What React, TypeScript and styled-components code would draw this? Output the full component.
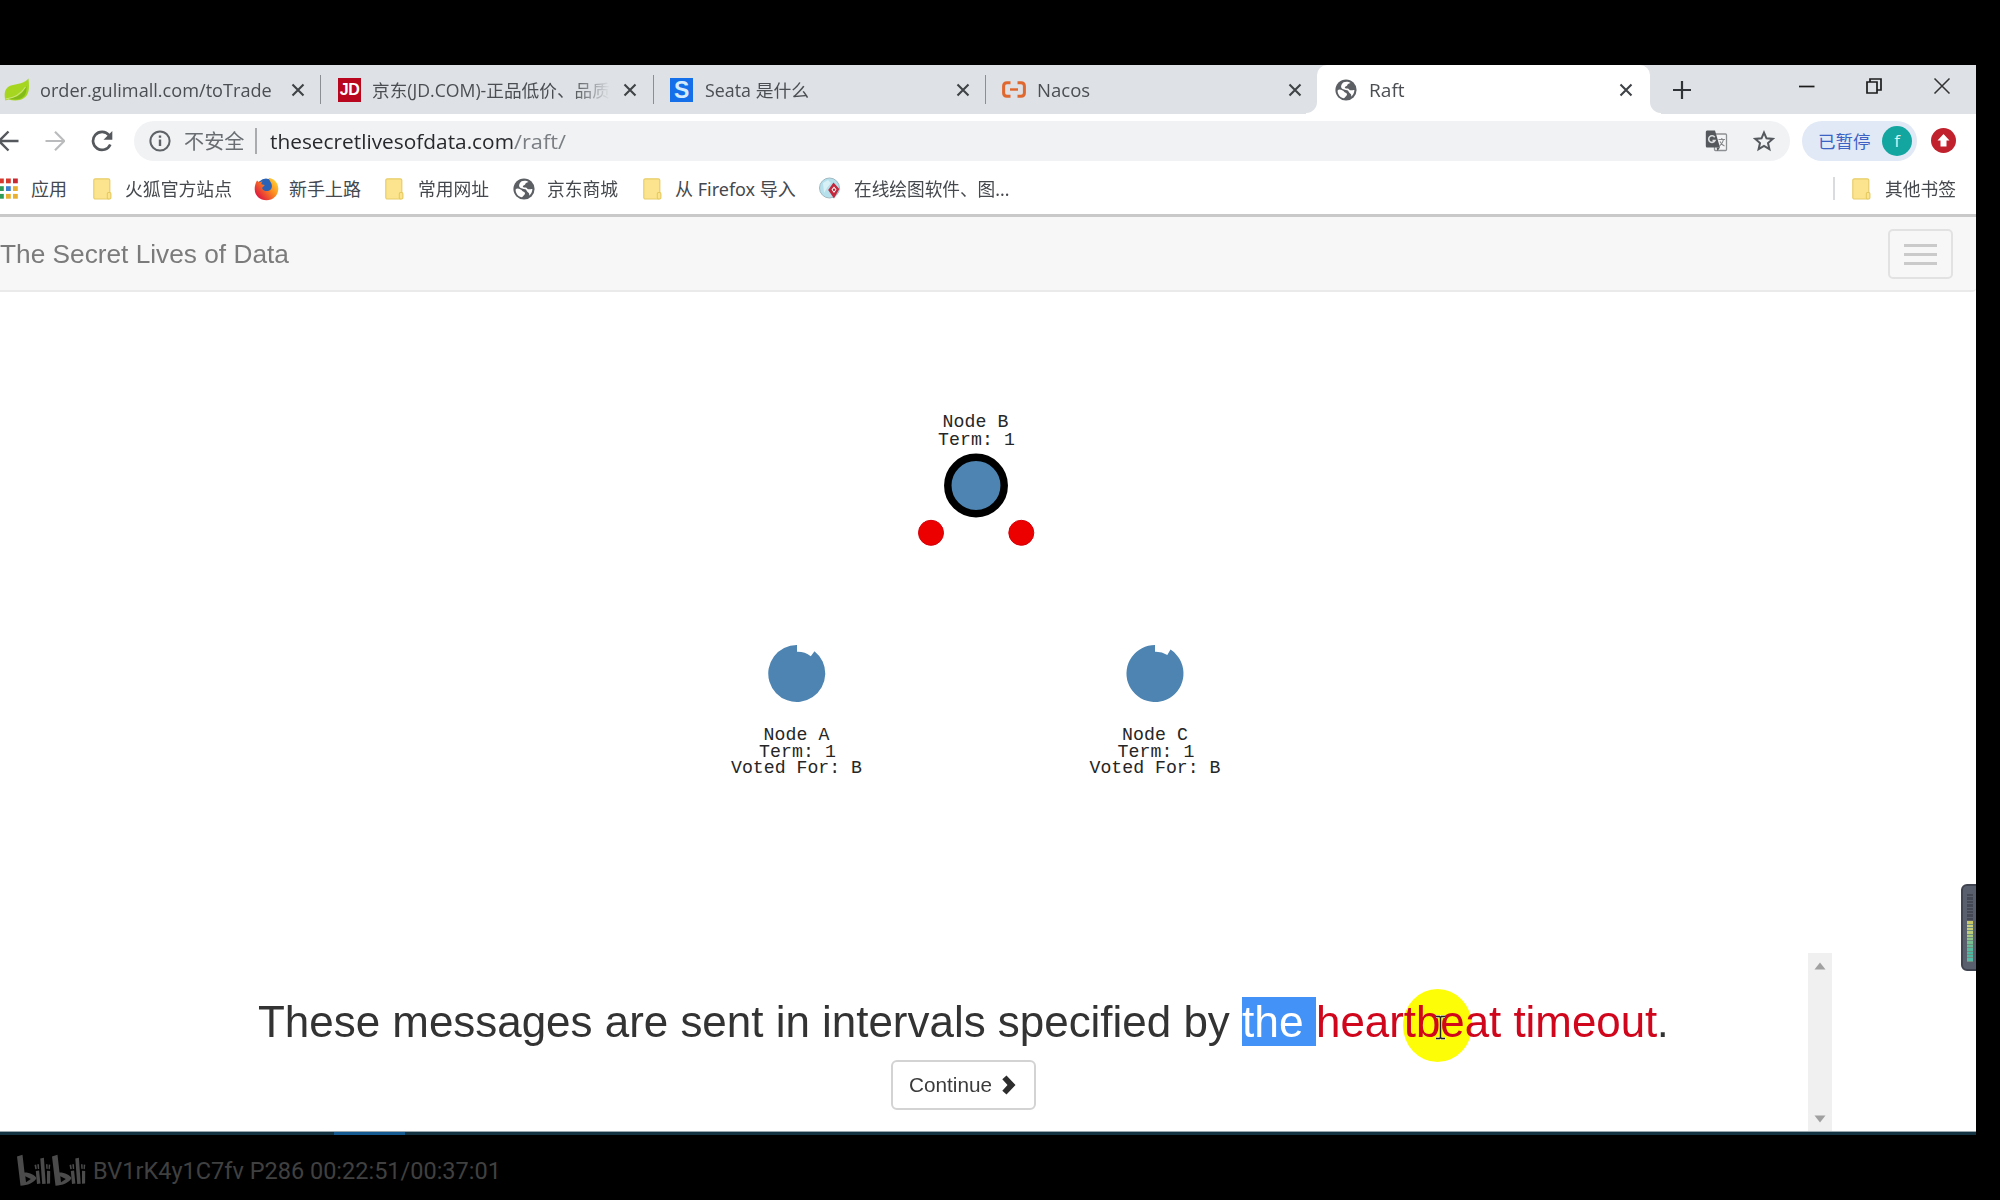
import React, { useLayoutEffect, useRef } from "react";
import styled, { createGlobalStyle } from "styled-components";

const GlobalStyle = createGlobalStyle`
  * { box-sizing: border-box; }
  body { margin: 0; background: #000; overflow: hidden; }
`;

const uiFont = `"Open Sans", "Noto Sans CJK SC", sans-serif`;
const cjkFont = `"Noto Sans", "Noto Sans CJK SC", sans-serif`;
const pageFont = `"Liberation Sans", Arial, sans-serif`;

/* ---------- text stretched to a given width ---------- */
const FitBox = styled.span<{ $w: number }>`
  display: block;
  flex: none;
  width: ${(p) => p.$w}px;
  white-space: pre;
`;
const FitInner = styled.span`
  display: inline-block;
  transform-origin: 0 50%;
`;
function Fit({ w, children }: { w: number; children: React.ReactNode }) {
  const ref = useRef<HTMLSpanElement>(null);
  useLayoutEffect(() => {
    const el = ref.current;
    if (el && el.offsetWidth) el.style.transform = `scaleX(${w / el.offsetWidth})`;
  }, [w]);
  return (
    <FitBox $w={w}>
      <FitInner ref={ref}>{children}</FitInner>
    </FitBox>
  );
}

/* ---------- frame ---------- */
const Frame = styled.div`
  width: 2000px;
  height: 1200px;
  padding-top: 65px;
  background: #000;
  display: flex;
  flex-direction: column;
  overflow: hidden;
`;
const Screen = styled.div`
  position: relative;
  width: 1976px;
  height: 1070px;
  background: #fff;
  display: flex;
  flex-direction: column;
  overflow: hidden;
`;

/* ---------- tabs ---------- */
const TabStrip = styled.div`
  height: 49px;
  flex: none;
  background: #dee1e5;
  display: flex;
`;
const Tab = styled.div<{ $w: number; $pad: number; $active?: boolean }>`
  position: relative;
  width: ${(p) => p.$w}px;
  height: 49px;
  padding-left: ${(p) => p.$pad}px;
  flex: none;
  display: flex;
  align-items: center;
  background: ${(p) => (p.$active ? "#fff" : "transparent")};
  border-radius: ${(p) => (p.$active ? "10px 10px 0 0" : "0")};
  &::before, &::after {
    content: "";
    display: ${(p) => (p.$active ? "block" : "none")};
    position: absolute;
    bottom: 0;
    width: 11px;
    height: 12px;
  }
  &::before { left: -11px; background: radial-gradient(circle at 0 0, transparent 10.5px, #fff 11.5px); }
  &::after { right: -11px; background: radial-gradient(circle at 100% 0, transparent 10.5px, #fff 11.5px); }
`;
const TabTitle = styled.div<{ $ml: number; $fade?: boolean }>`
  margin-left: ${(p) => p.$ml}px;
  padding-top: 1px;
  font: 17.5px/28px ${uiFont};
  color: #4b4e52;
  overflow: hidden;
  ${(p) => (p.$fade ? "-webkit-mask-image: linear-gradient(90deg, #000 84%, transparent 100%);" : "")}
`;
const TabEnd = styled.div<{ $gap: number }>`
  margin-left: auto;
  display: flex;
  align-items: center;
  gap: ${(p) => p.$gap}px;
`;
const TabRule = styled.div`
  width: 1.5px;
  height: 29px;
  background: #8b8e92;
`;
const StripTools = styled.div`
  flex: 1;
  display: flex;
  align-items: center;
  padding: 0 25px 0 23px;
`;
const WindowButtons = styled.div`
  margin-left: auto;
  margin-top: -8px;
  display: flex;
  align-items: center;
  gap: 51px;
`;

const CloseX = () => (
  <svg width="14" height="14" viewBox="0 0 14 14">
    <path d="M1.5 1.5l11 11M12.5 1.5l-11 11" stroke="#3f4246" strokeWidth="2.1" />
  </svg>
);
const Globe = ({ s }: { s: number }) => (
  <svg width={s} height={s} viewBox="0 0 22 22">
    <circle cx="11" cy="11" r="10.6" fill="#5c5f63" />
    <path
      d="M2.6 11.4C4 9.8 6 11 7.6 11.4c1.6.4 1.4 1.9 3 2.3 1.5.5 1.9 1.9.8 3-1 1.1-1.6 2.4-3 2.5-3.400-1-5.900-4-5.800-7.800z"
      fill="#fff"
    />
    <path
      d="M8.600 3.300c2-.9 5-.9 7 .7-1.200.6-2.900.5-3.200 1.900-.2 1.300-2.500 1-2.600 2.600 0 1 1.700 1.200 2.800 1 1.200-.1 1.500 1.600 2.800 1.800 1.400.3 2.500-.5 4-.2-.1 3-1.400 5.200-3.500 6.700.8-1.700.3-2.800-1-3.600-1.300-.7-1.100-2.400-2.700-3-1.800-.6-4.600-.2-5.800-2.200-.9-1.900.2-4.200 2.200-5.700z"
      fill="#fff"
    />
  </svg>
);
const Leaf = () => (
  <svg width="26" height="24" viewBox="0 0 26 24">
    <path d="M24.500.5c1 9 .8 16-4.500 19.500-5 3.300-11 2.600-15.500 1.500L1.300 22.500C-.5 14 1.500 9 8 7.300 14 5.800 20 5.500 24.500.5z" fill="#a6d61f" />
    <path d="M4 20.500C12 20 18 17 22.500 8c.3 6-1 9.500-4 11.600-4 2.600-9 2.400-14.500.9z" fill="#83bb1b" />
    <path d="M1.500 21C10 20 17 16 21.500 9" stroke="#c9e57a" strokeWidth="1.100" fill="none" />
  </svg>
);
const LogoTile = styled.div<{ $bg: string; $size: number; $c: string; $bold?: boolean }>`
  width: 23px;
  height: 24px;
  flex: none;
  display: flex;
  align-items: center;
  justify-content: center;
  background: ${(p) => p.$bg};
  color: ${(p) => p.$c};
  font: bold ${(p) => p.$size}px/24px "Liberation Sans", sans-serif;
  letter-spacing: -0.5px;
`;
const NacosMark = () => (
  <svg width="24" height="17" viewBox="0 0 24 17" fill="none" stroke="#e0682f" strokeWidth="3">
    <path d="M8.500 1.700H5Q1.600 1.700 1.600 5v7Q1.600 15.300 5 15.300h3.500M15.500 1.700H19q3.400 0 3.400 3.300v7q0 3.300-3.400 3.300h-3.500" />
    <path d="M8 8.500h8" strokeWidth="2.400" />
  </svg>
);

/* ---------- toolbar ---------- */
const Toolbar = styled.div`
  height: 53px;
  flex: none;
  display: flex;
  align-items: center;
  background: #fff;
`;
const NavIcons = styled.div`
  width: 134px;
  display: flex;
  align-items: center;
  gap: 25px;
  flex: none;
`;
const Omnibox = styled.div`
  width: 1656px;
  height: 40px;
  flex: none;
  border-radius: 20px;
  background: #f0f2f4;
  display: flex;
  align-items: center;
  padding: 0 15px 0 15px;
  font: 20.5px/30px ${uiFont};
  color: #6a6d71;
`;
const Insecure = styled.div`
  margin-left: 13px;
`;
const UrlRule = styled.div`
  width: 1.500px;
  height: 26px;
  margin: 0 13.500px 0 10px;
  background: #a9abae;
`;
const Host = styled.div`
  display: flex;
  color: #27292c;
`;
const Path = styled.div`
  color: #7b7e82;
`;
const BoxIcons = styled.div`
  margin-left: auto;
  display: flex;
  align-items: center;
  gap: 25px;
`;
const Profile = styled.div`
  margin-left: 12px;
  width: 115px;
  height: 40px;
  border-radius: 20px;
  background: #e1e9f6;
  display: flex;
  align-items: center;
  padding-left: 16px;
  gap: 11px;
  color: #3c62c4;
  font: 17.500px/26px ${cjkFont};
`;
const Avatar = styled.div`
  width: 30px;
  height: 30px;
  border-radius: 50%;
  background: #13a5a0;
  color: #d9f3f1;
  text-align: center;
  font: 17px/29px "Open Sans", sans-serif;
`;
const UpdateDot = styled.div`
  margin-left: 14px;
  width: 25px;
  height: 25px;
  border-radius: 50%;
  background: #c0212c;
  display: flex;
  align-items: center;
  justify-content: center;
`;

/* ---------- bookmarks ---------- */
const Bookmarks = styled.div`
  height: 47px;
  flex: none;
  display: flex;
  align-items: center;
  padding-bottom: 4px;
  font: 18px/26px ${cjkFont};
  color: #45484c;
`;
const Bookmark = styled.div<{ $gap: number; $ml: number }>`
  display: flex;
  align-items: center;
  gap: ${(p) => p.$gap}px;
  margin-left: ${(p) => p.$ml}px;
  flex: none;
`;
const OtherBookmarks = styled.div`
  margin-left: auto;
  padding-right: 20px;
  display: flex;
  align-items: center;
  gap: 14px;
`;
const BookmarkRule = styled.div`
  width: 2px;
  height: 23px;
  margin-right: 3px;
  background: #d9dbdd;
`;
const FolderIcon = () => (
  <svg width="19" height="22" viewBox="0 0 19 22">
    <rect x=".8" y=".8" width="16" height="20.200" rx="1.500" fill="#fbe48d" stroke="#e8cd6b" strokeWidth="1.200" />
    <rect x="14.300" y="14.500" width="3.600" height="6.500" rx="1.200" fill="#fbe48d" stroke="#e5c95f" strokeWidth="1.100" />
  </svg>
);
const appColors = ["#d8392f", "#d8392f", "#c8282f", "#2f9b57", "#3a7fd0", "#e8b02e", "#2f9b57", "#e8b02e", "#e8b02e"];
const AppsIcon = () => (
  <svg width="18" height="21" viewBox="0 0 18 21">
    {appColors.map((c, i) => (
      <rect key={i} x={-1 + (i % 3) * 7} y={0.5 + Math.floor(i / 3) * 7.7} width="4.800" height="4.800" fill={c} />
    ))}
  </svg>
);
const FirefoxIcon = () => (
  <svg width="25" height="24" viewBox="0 0 25 24">
    <defs>
      <linearGradient id="fox" x1="1" y1=".1" x2=".1" y2=".8">
        <stop offset="0" stopColor="#ffe03a" />
        <stop offset=".45" stopColor="#fb8b1e" />
        <stop offset="1" stopColor="#e0193f" />
      </linearGradient>
    </defs>
    <circle cx="12" cy="10.500" r="9" fill="#2a62b5" />
    <path
      d="M3 3.500l2.500 2C6.500 4.600 7.500 4.400 8.500 4.500c-.8.800-1.200 1.800-1 2.800l3 .6c.3 1.200-2.200 1.700-2.400 3 .5 2.800 4.200 3.900 7.200 2.600 3.300-1.700 3.200-6 1.200-8.600L14.500 1C19.500 1.200 24.500 5.500 24.300 12c-.2 6.500-5.300 11.300-11.800 11.300C6 23.300.8 18.500.7 12.500.6 9 1.500 6 3 3.500z"
      fill="url(#fox)"
    />
  </svg>
);
const DrawIcon = () => (
  <svg width="22" height="23" viewBox="0 0 22 23">
    <circle cx="10.500" cy="11" r="10" fill="#b5e0ec" stroke="#9fb9c2" />
    <path d="M4 6l5-3 3 3-4 5-3 5z" fill="#d8f1f7" />
    <path d="M14.500 5.500l5.800 6.500-5.300 9.500-5.800-8.500z" fill="#c3283c" />
    <path d="M15 9.500l2.500 3-2.500 3.500-2.500-3.500z" fill="#fff" />
    <circle cx="15" cy="12.700" r="1.200" fill="#c3283c" />
  </svg>
);

/* ---------- page ---------- */
const PageNav = styled.div`
  height: 78px;
  flex: none;
  border-top: 3px solid #c9c9c9;
  border-bottom: 2px solid #eaeaea;
  border-radius: 0 0 4px 0;
  background: #f7f7f7;
  display: flex;
  align-items: center;
  justify-content: space-between;
  padding-right: 23px;
  font: 25.800px/36px ${pageFont};
  color: #7b7b7b;
`;
const MenuButton = styled.div`
  width: 65px;
  height: 50px;
  margin-top: 1px;
  border: 2px solid #e2e2e2;
  border-radius: 5px;
  display: flex;
  flex-direction: column;
  align-items: center;
  justify-content: center;
  gap: 6px;
`;
const MenuBar = styled.div`
  width: 33px;
  height: 3px;
  background: #cacaca;
`;
const Stage = styled.div`
  height: 661px;
  flex: none;
`;
const Diagram = styled.svg`
  display: block;
  font: 18.200px "Liberation Mono", monospace;
`;
const Narration = styled.div`
  position: relative;
  height: 178px;
  flex: none;
  display: flex;
`;
const Story = styled.div`
  width: 1808px;
  flex: none;
  padding-top: 44px;
  display: flex;
  flex-direction: column;
`;
const Headline = styled.div`
  position: relative;
  height: 48.500px;
  padding-left: 258px;
  display: flex;
  font: 45px/50px ${pageFont};
  color: #333;
`;
const Selected = styled.span`
  height: 48.500px;
  background: #4292f7;
  color: #fff;
`;
const Term = styled.span`
  position: relative;
  color: #d0061c;
`;
const PointerHalo = styled.div`
  position: absolute;
  left: 1403px;
  top: -8px;
  width: 69px;
  height: 73px;
  border-radius: 50%;
  background: #fdfd08;
`;
const Caret = styled.svg`
  position: absolute;
  left: 1435px;
  top: 18px;
`;
const ContinueButton = styled.div`
  width: 145px;
  height: 50px;
  margin: 14.500px 0 0 891px;
  border: 2px solid #d3d3d3;
  border-radius: 6px;
  background: #fff;
  display: flex;
  align-items: center;
  padding-left: 16px;
  gap: 9px;
  font: 20px/28px ${pageFont};
  color: #3b3b3b;
`;
const ScrollTrack = styled.div`
  width: 24px;
  height: 178px;
  background: #f0f0f0;
  display: flex;
  flex-direction: column;
  align-items: center;
  justify-content: space-between;
  padding: 9px 0 8px;
`;
const Taskbar = styled.div`
  height: 4px;
  flex: none;
  border-top: 1px solid #9aa8ae;
  background: #153443;
  padding-left: 334px;
`;
const TaskbarActive = styled.div`
  width: 71px;
  height: 3px;
  background: #155b92;
`;
const VolumeMeter = styled.div`
  position: absolute;
  left: 1961px;
  top: 819px;
  width: 24px;
  height: 87px;
  border-radius: 6px;
  border: 2px solid #3f4450;
  background: #595f6d;
  padding: 8px 0 0 4px;
  display: flex;
  flex-direction: column;
`;
const MeterBar = styled.div<{ $c: string; $gapColor: string }>`
  width: 6px;
  height: 3.400px;
  flex: none;
  background: ${(p) => p.$c};
  border-bottom: 1px solid ${(p) => p.$gapColor};
`;

/* ---------- footer ---------- */
const Footer = styled.div`
  height: 65px;
  display: flex;
  align-items: center;
  padding: 6px 0 0 17px;
  gap: 7px;
  font: 23.500px/32px Roboto, sans-serif;
  color: #404040;
`;
const BiliLogo = () => (
  <svg width="69" height="33" viewBox="0 0 69 33" fill="#4b4b4b">
    {[0, 35].map((x) => (
      <g key={x} transform={`translate(${x} 0)`}>
        <path
          fillRule="evenodd"
          d="M0 2.500L5.500.8 7.500 18.500C13 18.500 18 21 19.500 24 18 28.500 10 31.500 3.500 31.800zM8.300 22.300L9 28.200 13.800 25z"
        />
        <path d="M18.800 17l3.300-.4 1.300 13-3.400.3zM23.300 4.500l3.600-.8 1.800 26-3.500.2zM30 16.800l3.200.2-.1 12.600-3.100.2zM17.500 11l1.700-.5.600 4.500-1.500.2zM20.300 10.300l1.700-.1.200 4.700-1.400.1zM29 10.200l1.600.1.100 4.600-1.400-.1zM31.700 10.500l1.600.3-.5 4.400-1.300-.2z" />
      </g>
    ))}
  </svg>
);

const meter = [
  "#444955", "#444955", "#444955", "#444955", "#444955", "#444955", "#444955", "#444955",
  "#c9c968", "#cdd07c", "#c5cd78", "#bccd7c", "#a9c97f", "#8fc58a", "#78c092", "#65bd98", "#57ba9e", "#4eb9a2", "#4eb9a2", "#55bba8",
];

export default function App() {
  return (
    <>
      <GlobalStyle />
      <Frame>
        <Screen>
          <TabStrip>
            <Tab $w={321} $pad={4}>
              <Leaf />
              <TabTitle $ml={10}><Fit w={232}>order.gulimall.com/toTrade</Fit></TabTitle>
              <TabEnd $gap={15}><CloseX /><TabRule /></TabEnd>
            </Tab>
            <Tab $w={333} $pad={17}>
              <LogoTile $bg="#b8061f" $c="#fff" $size={16}>JD</LogoTile>
              <TabTitle $ml={11} $fade><Fit w={238}>京东(JD.COM)-正品低价、品质</Fit></TabTitle>
              <TabEnd $gap={16}><CloseX /><TabRule /></TabEnd>
            </Tab>
            <Tab $w={332} $pad={16}>
              <LogoTile $bg="#156fe8" $c="#d5ecff" $size={23}>S</LogoTile>
              <TabTitle $ml={12}><Fit w={104}>Seata 是什么</Fit></TabTitle>
              <TabEnd $gap={15}><CloseX /><TabRule /></TabEnd>
            </Tab>
            <Tab $w={331} $pad={16}>
              <NacosMark />
              <TabTitle $ml={11}><Fit w={53}>Nacos</Fit></TabTitle>
              <TabEnd $gap={15}><CloseX /><span /></TabEnd>
            </Tab>
            <Tab $w={333} $pad={18} $active>
              <Globe s={22} />
              <TabTitle $ml={12}><Fit w={36}>Raft</Fit></TabTitle>
              <TabEnd $gap={17}><CloseX /><span /></TabEnd>
            </Tab>
            <StripTools>
              <svg width="18" height="18" viewBox="0 0 18 18">
                <path d="M9 0v18M0 9h18" stroke="#2f3236" strokeWidth="2.200" />
              </svg>
              <WindowButtons>
                <svg width="16" height="16" viewBox="0 0 16 16">
                  <path d="M0 8.500h15.500" stroke="#1c1c1c" strokeWidth="1.700" />
                </svg>
                <svg width="16" height="16" viewBox="0 0 16 16" fill="none" stroke="#1c1c1c" strokeWidth="1.700">
                  <path d="M1 4h10v11H1zM4 4V1h11v11h-4" />
                </svg>
                <svg width="18" height="16" viewBox="0 0 18 16">
                  <path d="M1.500.5l15 15M16.500.5l-15 15" stroke="#333" strokeWidth="1.500" />
                </svg>
              </WindowButtons>
            </StripTools>
          </TabStrip>

          <Toolbar>
            <NavIcons>
              <svg width="19" height="22" viewBox="0 0 19 22" fill="none" stroke="#55585c" strokeWidth="2.400">
                <path d="M18.500 11H-1M8.500 1.500L-1 11l9.500 9.500" />
              </svg>
              <svg width="21" height="22" viewBox="0 0 21 22" fill="none" stroke="#b9bbbd" strokeWidth="2.200">
                <path d="M1.500 11h18.500M11 1.800L20.300 11 11 20.200" />
              </svg>
              <svg width="23" height="22" viewBox="0 0 23 22" fill="none" stroke="#55585c" strokeWidth="2.700">
                <path d="M20.300 14.500A9 9 0 1 1 19 5.200" />
                <path d="M22.300 1v8.800H13.500z" fill="#55585c" stroke="none" />
              </svg>
            </NavIcons>
            <Omnibox>
              <svg width="22" height="22" viewBox="0 0 22 22" fill="none" stroke="#5f6266" strokeWidth="2">
                <circle cx="11" cy="11" r="9.600" />
                <path d="M11 9.500v6.500M11 5.500v2.300" strokeWidth="2.400" />
              </svg>
              <Insecure><Fit w={61}>不安全</Fit></Insecure>
              <UrlRule />
              <Host><Fit w={244}>thesecretlivesofdata.com</Fit></Host>
              <Path><Fit w={52}>/raft/</Fit></Path>
              <BoxIcons>
                <svg width="23" height="22" viewBox="0 0 23 22">
                  <rect x="9.500" y="4" width="12" height="16.500" rx="1" fill="#f4f5f6" stroke="#8d9093" strokeWidth="1.300" />
                  <path d="M2 .5h8l5 17H2Q.8 17.500.8 16V2Q.8.500 2 .500z" fill="#55585c" />
                  <path d="M9.700 7.200A3.300 3.300 0 1 0 10 10.500H7.500" fill="none" stroke="#dcdee0" strokeWidth="1.600" />
                  <path d="M13.500 9.500h6.500M16.800 8v1.500M18.500 9.500c-.5 3-2 5-4 6.500M15 11.500c1 2 2.500 3.500 4.500 4.500" stroke="#85888b" strokeWidth="1.100" fill="none" />
                  <path d="M11.500 17.500h3.500l-2.500 3.500z" fill="#55585c" />
                </svg>
                <svg width="22" height="22" viewBox="0 0 22 22">
                  <path d="M11 2.600l2.500 5.700 6.200.6-4.700 4.100 1.400 6.100L11 15.900l-5.400 3.200L7 13 2.300 8.900l6.200-.6z" fill="none" stroke="#55585c" strokeWidth="2" />
                </svg>
              </BoxIcons>
            </Omnibox>
            <Profile>
              <Fit w={53}>已暂停</Fit>
              <Avatar>f</Avatar>
            </Profile>
            <UpdateDot>
              <svg width="13" height="13" viewBox="0 0 13 13">
                <path d="M6.500 0L12.500 6.500H9.500V12.500H3.500V6.500H.5z" fill="#fff" />
              </svg>
            </UpdateDot>
          </Toolbar>

          <Bookmarks>
            <Bookmark $ml={0} $gap={13}><AppsIcon /><Fit w={36}>应用</Fit></Bookmark>
            <Bookmark $ml={26} $gap={13}><FolderIcon /><Fit w={107}>火狐官方站点</Fit></Bookmark>
            <Bookmark $ml={22} $gap={10}><FirefoxIcon /><Fit w={72}>新手上路</Fit></Bookmark>
            <Bookmark $ml={24} $gap={14}><FolderIcon /><Fit w={71}>常用网址</Fit></Bookmark>
            <Bookmark $ml={24} $gap={12}><Globe s={22} /><Fit w={71}>京东商城</Fit></Bookmark>
            <Bookmark $ml={25} $gap={13}><FolderIcon /><Fit w={121}>从 Firefox 导入</Fit></Bookmark>
            <Bookmark $ml={23} $gap={13}><DrawIcon /><Fit w={155}>在线绘图软件、图...</Fit></Bookmark>
            <OtherBookmarks>
              <BookmarkRule />
              <FolderIcon />
              <Fit w={71}>其他书签</Fit>
            </OtherBookmarks>
          </Bookmarks>

          <PageNav>
            <Fit w={289}>The Secret Lives of Data</Fit>
            <MenuButton><MenuBar /><MenuBar /><MenuBar /></MenuButton>
          </PageNav>

          <Stage>
            <Diagram width="1976" height="661" viewBox="0 292 1976 661">
              <g fill="#262626">
                <text x="942.500" y="426.500" textLength="66">Node B</text>
                <text x="938" y="444.500" textLength="77">Term: 1</text>
                <text x="763.500" y="739.500" textLength="66">Node A</text>
                <text x="759" y="757" textLength="77">Term: 1</text>
                <text x="731" y="773" textLength="131">Voted For: B</text>
                <text x="1122" y="739.500" textLength="66">Node C</text>
                <text x="1117.500" y="757" textLength="77">Term: 1</text>
                <text x="1089.500" y="773" textLength="131">Voted For: B</text>
              </g>
              <circle cx="976" cy="485.500" r="28.200" fill="#4d84b1" stroke="#000" strokeWidth="7.500" />
              <circle cx="931" cy="532.800" r="12.500" fill="#ec0000" stroke="#d60008" strokeWidth="1" />
              <circle cx="1021.300" cy="532.800" r="12.500" fill="#ec0000" stroke="#d60008" strokeWidth="1" />
              <path d="M797 645V651.800A21.500 21.500 0 0 1 810.800 656.200L814.500 651.200A28.500 28.500 0 1 1 797 645z" fill="#4d84b1" />
              <path d="M1155 645V651.800A21.500 21.500 0 0 1 1167.300 655L1170.500 649.600A28.500 28.500 0 1 1 1155 645z" fill="#4d84b1" />
            </Diagram>
          </Stage>

          <Narration>
            <Story>
              <Headline>
                <PointerHalo />
                <Fit w={984}>{"These messages are sent in intervals specified by "}</Fit>
                <Selected><Fit w={74}>{"the "}</Fit></Selected>
                <Term><Fit w={341}>heartbeat timeout</Fit></Term>
                <Fit w={12}>.</Fit>
                <Caret width="11" height="25" viewBox="0 0 11 25" fill="none">
                  <path d="M1 1.500h3.500l1 1 1-1H10M5.500 2v21M1 23.500h3.500l1-1 1 1H10" stroke="#f5f5b0" strokeWidth="3" />
                  <path d="M1 1.500h3.500l1 1 1-1H10M5.500 2v21M1 23.500h3.500l1-1 1 1H10" stroke="#222" strokeWidth="1.500" />
                </Caret>
              </Headline>
              <ContinueButton>
                <Fit w={83}>Continue</Fit>
                <svg width="15" height="20" viewBox="0 0 15 20">
                  <path d="M5.500.5L14.500 10 5.500 19.500 1.300 15.700 6.500 10 1.300 4.300z" fill="#2d2d2d" />
                </svg>
              </ContinueButton>
            </Story>
            <ScrollTrack>
              <svg width="12" height="8" viewBox="0 0 12 8"><path d="M6 .5L11.500 7.500H.5z" fill="#a0a0a0" /></svg>
              <svg width="12" height="8" viewBox="0 0 12 8"><path d="M6 7.500L11.500.5H.5z" fill="#a0a0a0" /></svg>
            </ScrollTrack>
          </Narration>

          <Taskbar><TaskbarActive /></Taskbar>
          <VolumeMeter>
            {meter.map((c, i) => <MeterBar key={i} $c={c} $gapColor={i < 8 ? "#595f6d" : "#6f9080"} />)}
          </VolumeMeter>
        </Screen>
        <Footer>
          <BiliLogo />
          <Fit w={408}>BV1rK4y1C7fv P286 00:22:51/00:37:01</Fit>
        </Footer>
      </Frame>
    </>
  );
}
